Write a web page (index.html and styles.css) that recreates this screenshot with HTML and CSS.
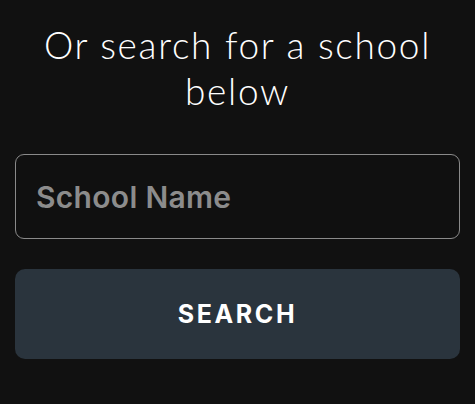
FILE: index.html
```html
<!DOCTYPE html>
<html lang="en">
<head>
<meta charset="utf-8">
<link rel="stylesheet" href="styles.css">
<title>Search</title>
</head>
<body>
<main class="panel">
  <h2 class="title">Or search for a school below</h2>
  <form class="search-form">
    <input class="field" type="text" placeholder="School Name">
    <button class="btn" type="button">SEARCH</button>
  </form>
</main>
</body>
</html>
```

FILE: styles.css
```css
html, body {
  margin: 0;
  padding: 0;
  background: #111111;
}
.panel {
  padding: 22px 15px 0 15px;
  display: flex;
  flex-direction: column;
}
.title {
  margin: 0;
  font-family: Lato, "Open Sans", sans-serif;
  font-weight: 300;
  font-size: 37px;
  line-height: 46px;
  letter-spacing: 1.7px;
  color: #ffffff;
  text-align: center;
}
.search-form {
  margin-top: 40px;
  display: flex;
  flex-direction: column;
  gap: 30px;
}
.field {
  box-sizing: border-box;
  height: 85px;
  width: 100%;
  margin: 0;
  padding: 0 20px;
  background: #101010;
  border: 1.5px solid #8a8a8a;
  border-radius: 9px;
  font-family: Inter, "Liberation Sans", sans-serif;
  font-weight: 600;
  font-size: 30px;
  letter-spacing: 0.3px;
  color: #ffffff;
  outline: none;
}
.field::placeholder {
  color: #8c8c8c;
}
.btn {
  height: 90px;
  width: 100%;
  margin: 0;
  border: none;
  border-radius: 10px;
  background: #2a343d;
  color: #ffffff;
  font-family: Inter, "Liberation Sans", sans-serif;
  font-weight: 700;
  font-size: 25px;
  letter-spacing: 2.6px;
  cursor: pointer;
}
```
